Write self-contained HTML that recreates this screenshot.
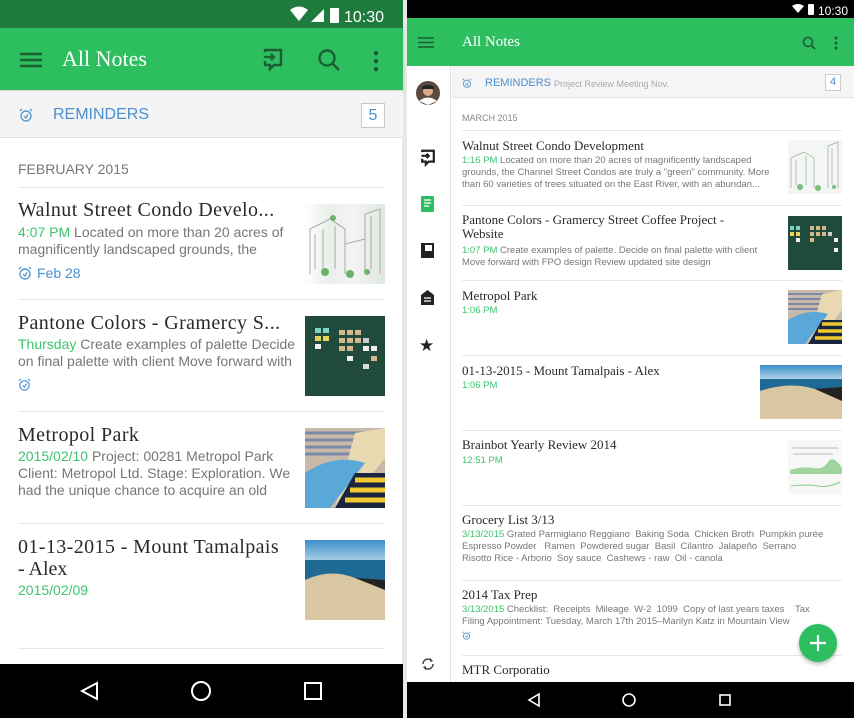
<!DOCTYPE html>
<html><head><meta charset="utf-8"><style>
*{margin:0;padding:0;box-sizing:border-box}
body{width:854px;height:718px;position:relative;overflow:hidden;background:#fff;font-family:"Liberation Sans",sans-serif}
.a{position:absolute;white-space:nowrap}
.ser{font-family:"Liberation Serif",serif;color:#2a2a2a}
.g{color:#3cc46e}
.gr{color:#777}
.div{position:absolute;height:1px;background:#e6e6e6}
</style></head><body>
<svg width="0" height="0" style="position:absolute"><defs><symbol id="al" viewBox="0 0 14 14"><circle cx="7" cy="8" r="5" fill="none" stroke="#5a9bd5" stroke-width="1.4"/><path d="M1 3L3 1M13 3L11 1M5 8L7 10L9 6" fill="none" stroke="#5a9bd5" stroke-width="1.3"/></symbol></defs></svg>
<div class="a" style="left:402px;top:0;width:5px;height:718px;background:#e8e8e8"></div>

<!-- LEFT PHONE -->
<div class="a" style="left:0;top:0;width:403px;height:28px;background:#1e7b3d"></div>
<svg class="a" style="left:288px;top:5px" width="110" height="20" viewBox="0 0 110 20">
<path d="M2 5 Q11 -2 20 5 L11 16Z" fill="#fff"/><path d="M23 17 L36 4 L36 17Z" fill="#fff"/><rect x="42" y="3" width="9" height="15" rx="1" fill="#fff"/>
<text x="56" y="17" font-family="Liberation Sans" font-size="16" fill="#fff">10:30</text></svg>
<div class="a" style="left:0;top:28px;width:403px;height:62px;background:#2dbe60;box-shadow:0 2px 3px rgba(0,0,0,.2)"></div>
<svg class="a" style="left:19px;top:52px" width="24" height="16"><path d="M1 2H23M1 8H23M1 14H23" stroke="#1a5e33" stroke-width="2.4"/></svg>
<div class="a ser" style="left:62px;top:46px;font-size:22px;color:#fff">All Notes</div>
<svg class="a" style="left:262px;top:48px" width="22" height="24" viewBox="0 0 22 24"><path d="M3 4V2H19V17H12L8 21V17H3V13" fill="none" stroke="#1a5e33" stroke-width="2.4"/><path d="M2 9H12M9 6L12 9L9 12" fill="none" stroke="#1a5e33" stroke-width="2.2"/></svg>
<svg class="a" style="left:317px;top:48px" width="24" height="24"><circle cx="10" cy="10" r="7.5" fill="none" stroke="#1a5e33" stroke-width="2.4"/><path d="M15.5 15.5L22 22" stroke="#1a5e33" stroke-width="2.6"/></svg>
<svg class="a" style="left:372px;top:50px" width="8" height="22"><circle cx="4" cy="3" r="2.3" fill="#1a5e33"/><circle cx="4" cy="11" r="2.3" fill="#1a5e33"/><circle cx="4" cy="19" r="2.3" fill="#1a5e33"/></svg>
<div class="a" style="left:0;top:91px;width:403px;height:47px;background:#f4f4f4;border-bottom:1px solid #e2e2e2"></div>
<svg class="a" style="left:19px;top:108px" width="14" height="14"><use href="#al"/></svg>
<div class="a" style="left:53px;top:106px;font-size:16px;color:#4a8fd0">REMINDERS</div>
<div class="a" style="left:361px;top:103px;width:24px;height:25px;border:1px solid #c8c8c8;background:#fff;color:#4a8fd0;font-size:16px;text-align:center;line-height:23px">5</div>
<div class="a gr" style="left:18px;top:161px;font-size:14px">FEBRUARY 2015</div>
<div class="div" style="left:18px;top:187px;width:367px"></div>

<div class="a ser" style="left:18px;top:199px;font-size:20px;letter-spacing:.4px">Walnut Street Condo Develo...</div>
<div class="a gr" style="left:18px;top:224px;font-size:14px"><span class="g">4:07 PM</span> Located on more than 20 acres of</div>
<div class="a gr" style="left:18px;top:241px;font-size:14px">magnificently landscaped grounds, the</div>
<svg class="a" style="left:18px;top:266px" width="14" height="14"><use href="#al"/></svg>
<div class="a" style="left:37px;top:265px;font-size:14px;color:#4a8fd0">Feb 28</div>
<div class="a" style="left:305px;top:204px;width:80px;height:80px;background:linear-gradient(90deg,#fff,#e9efe9 30%,#f3f3f3 60%,#dfe8df);"></div>
<svg class="a" style="left:305px;top:204px" width="80" height="80"><g fill="none" stroke="#999" stroke-width=".8"><path d="M5 70V25L25 15L40 25V70M60 70V10L75 5V70M40 40L60 35M10 30V65M18 25V65M30 22V65M66 12V65"/></g><g fill="#6bb36b"><circle cx="20" cy="68" r="4"/><circle cx="45" cy="70" r="4"/><circle cx="62" cy="68" r="3"/><circle cx="28" cy="14" r="3"/></g></svg>
<div class="div" style="left:18px;top:299px;width:367px"></div>

<div class="a ser" style="left:18px;top:312px;font-size:20px;letter-spacing:.4px">Pantone Colors - Gramercy S...</div>
<div class="a gr" style="left:18px;top:336px;font-size:14px"><span class="g">Thursday</span> Create examples of palette Decide</div>
<div class="a gr" style="left:18px;top:353px;font-size:14px">on final palette with client Move forward with</div>
<svg class="a" style="left:18px;top:378px" width="13" height="13"><use href="#al"/></svg>
<svg class="a" style="left:305px;top:316px" width="80" height="80"><rect width="80" height="80" fill="#1f4a3c"/><g fill="#d9b68a"><rect x="10" y="12" width="6" height="5" fill="#7fd3c6"/><rect x="18" y="12" width="6" height="5" fill="#7fd3c6"/><rect x="10" y="20" width="6" height="5" fill="#e8d35a"/><rect x="18" y="20" width="6" height="5" fill="#e8d35a"/><rect x="10" y="28" width="6" height="5" fill="#eee"/><rect x="34" y="14" width="6" height="5"/><rect x="42" y="14" width="6" height="5"/><rect x="50" y="14" width="6" height="5"/><rect x="34" y="22" width="6" height="5"/><rect x="42" y="22" width="6" height="5"/><rect x="50" y="22" width="6" height="5"/><rect x="58" y="22" width="6" height="5" fill="#ccc"/><rect x="34" y="30" width="6" height="5"/><rect x="42" y="30" width="6" height="5"/><rect x="58" y="30" width="6" height="5" fill="#eee"/><rect x="66" y="30" width="6" height="5" fill="#eee"/><rect x="42" y="40" width="6" height="5" fill="#eee"/><rect x="66" y="40" width="6" height="5"/><rect x="58" y="48" width="6" height="5" fill="#ddd"/></g></svg>
<div class="div" style="left:18px;top:411px;width:367px"></div>

<div class="a ser" style="left:18px;top:424px;font-size:20px;letter-spacing:.4px">Metropol Park</div>
<div class="a gr" style="left:18px;top:448px;font-size:14px"><span class="g">2015/02/10</span> Project: 00281 Metropol Park</div>
<div class="a gr" style="left:18px;top:465px;font-size:14px">Client: Metropol Ltd. Stage: Exploration. We</div>
<div class="a gr" style="left:18px;top:482px;font-size:14px">had the unique chance to acquire an old</div>
<svg class="a" style="left:305px;top:428px" width="80" height="80"><rect width="80" height="80" fill="#c8b9a8"/><path d="M0 5H80M0 12H60M0 19H55M0 26H50" stroke="#7a8aa8" stroke-width="3"/><path d="M30 80L50 5L80 0V30L40 80Z" fill="#e9d9b0"/><path d="M0 80V45Q30 25 60 35L25 80Z" fill="#5aa8d8"/><path d="M30 80L50 45H80V80Z" fill="#1a2540"/><path d="M40 72H80M45 62H80M50 52H80" stroke="#f0c830" stroke-width="5"/></svg>
<div class="div" style="left:18px;top:523px;width:367px"></div>

<div class="a ser" style="left:18px;top:536px;font-size:20px;letter-spacing:.4px">01-13-2015 - Mount Tamalpais</div>
<div class="a ser" style="left:18px;top:558px;font-size:20px">- Alex</div>
<div class="a g" style="left:18px;top:582px;font-size:14px">2015/02/09</div>
<svg class="a" style="left:305px;top:540px" width="80" height="80"><defs><linearGradient id="sk" x1="0" y1="0" x2="0" y2="1"><stop offset="0" stop-color="#3b8fc8"/><stop offset="1" stop-color="#cfe6f2"/></linearGradient></defs><rect width="80" height="28" fill="url(#sk)"/><rect y="20" width="80" height="20" fill="#1e6a95"/><path d="M0 40Q25 28 50 38L80 45V80H0Z" fill="#d8c7a0"/><path d="M50 38L80 40V50Z" fill="#222"/></svg>
<div class="div" style="left:18px;top:648px;width:367px"></div>

<div class="a" style="left:0;top:664px;width:403px;height:54px;background:#000"></div>
<svg class="a" style="left:0;top:664px" width="403" height="54"><g fill="none" stroke="#fff" stroke-width="2"><path d="M97 19V35L82 27Z"/><circle cx="201" cy="27" r="9"/><rect x="305" y="19" width="16" height="16"/></g></svg>

<!-- RIGHT TABLET -->
<div class="a" style="left:407px;top:0;width:447px;height:18px;background:#000"></div>
<svg class="a" style="left:790px;top:2px" width="64" height="15"><path d="M2 4Q8 0 14 4L8 11Z" fill="#fff"/><rect x="18" y="2" width="6" height="11" rx="1" fill="#fff"/><text x="28" y="13" font-family="Liberation Sans" font-size="12" fill="#fff">10:30</text></svg>
<div class="a" style="left:407px;top:18px;width:447px;height:48px;background:#2dbe60"></div>
<svg class="a" style="left:418px;top:37px" width="16" height="11"><path d="M0 1H16M0 5.5H16M0 10H16" stroke="#1a5e33" stroke-width="1.6"/></svg>
<div class="a ser" style="left:462px;top:34px;font-size:15px;color:#fff">All Notes</div>
<svg class="a" style="left:802px;top:36px" width="14" height="14"><circle cx="6" cy="6" r="4.5" fill="none" stroke="#1a5e33" stroke-width="1.6"/><path d="M9.5 9.5L13 13" stroke="#1a5e33" stroke-width="1.8"/></svg>
<svg class="a" style="left:833px;top:36px" width="6" height="14"><circle cx="3" cy="2" r="1.5" fill="#1a5e33"/><circle cx="3" cy="7" r="1.5" fill="#1a5e33"/><circle cx="3" cy="12" r="1.5" fill="#1a5e33"/></svg>
<div class="a" style="left:407px;top:66px;width:44px;height:616px;background:#fff;border-right:1px solid #e2e2e2"></div>
<svg class="a" style="left:416px;top:81px" width="24" height="24"><circle cx="12" cy="12" r="12" fill="#5a4a40"/><circle cx="12" cy="10" r="5" fill="#d8a888"/><path d="M3 20Q12 13 21 20L12 24Z" fill="#fff"/><path d="M6 6Q12 2 18 6V8H6Z" fill="#222"/></svg>
<svg class="a" style="left:420px;top:149px" width="16" height="18" viewBox="0 0 22 24"><path d="M3 4V2H19V17H12L8 21V17H3V13" fill="none" stroke="#222" stroke-width="3"/><path d="M2 9H12M9 6L12 9L9 12" fill="none" stroke="#222" stroke-width="3"/></svg>
<svg class="a" style="left:421px;top:196px" width="13" height="16"><rect width="13" height="16" rx="1.5" fill="#2dbe60"/><path d="M3 4H10M3 7H10M3 10H8" stroke="#fff" stroke-width="1.2"/></svg>
<svg class="a" style="left:421px;top:243px" width="13" height="15"><rect width="13" height="15" fill="#222"/><rect x="4" y="2" width="7" height="6" fill="#fff"/></svg>
<svg class="a" style="left:421px;top:290px" width="13" height="15"><path d="M6.5 0L13 5V15H0V5Z" fill="#222"/><path d="M3 8H10M3 11H10" stroke="#fff" stroke-width="1.2"/></svg>
<div class="a" style="left:419px;top:336px;font-size:17px;color:#222">★</div>
<svg class="a" style="left:421px;top:657px" width="14" height="14"><path d="M2 7A5 5 0 0 1 11 4M12 7A5 5 0 0 1 3 10" fill="none" stroke="#444" stroke-width="1.5"/><path d="M9 1L12 4L9 5Z M5 9L2 10L5 13Z" fill="#444"/></svg>
<div class="a" style="left:452px;top:66px;width:402px;height:32px;background:#f5f5f5;border-bottom:1px solid #e4e4e4"></div>
<svg class="a" style="left:462px;top:78px" width="10" height="10"><use href="#al"/></svg>
<div class="a" style="left:485px;top:77px;font-size:11px;color:#4a8fd0">REMINDERS</div>
<div class="a" style="left:554px;top:79px;font-size:9px;color:#aaa">Project Review Meeting Nov.</div>
<div class="a" style="left:825px;top:74px;width:16px;height:17px;border:1px solid #ccc;background:#fff;font-size:11px;color:#4a8fd0;text-align:center;line-height:15px">4</div>
<div class="a" style="left:462px;top:113px;font-size:9px;color:#888">MARCH 2015</div>
<div class="div" style="left:462px;top:130px;width:380px"></div>

<div class="a ser" style="left:462px;top:138px;font-size:13px">Walnut Street Condo Development</div>
<div class="a gr" style="left:462px;top:155px;font-size:9.5px;line-height:12px"><span class="g">1:16 PM</span> Located on more than 20 acres of magnificently landscaped<br>grounds, the Channel Street Condos are truly a "green" community. More<br>than 60 varieties of trees situated on the East River, with an abundan...</div>
<svg class="a" style="left:788px;top:140px" width="54" height="54"><rect width="54" height="54" fill="#f4f6f4"/><g fill="none" stroke="#9a9" stroke-width=".7"><path d="M3 48V18L16 12L26 18V48M40 48V6L50 2V48M8 20V45M18 16V45M44 8V45"/></g><g fill="#7bbd7b"><circle cx="12" cy="47" r="3"/><circle cx="30" cy="48" r="3"/><circle cx="46" cy="47" r="2"/></g></svg>
<div class="div" style="left:462px;top:205px;width:380px"></div>

<div class="a ser" style="left:462px;top:213px;font-size:13px;line-height:14px">Pantone Colors - Gramercy Street Coffee Project -<br>Website</div>
<div class="a gr" style="left:462px;top:245px;font-size:9.5px;line-height:12px"><span class="g">1:07 PM</span> Create examples of palette. Decide on final palette with client<br>Move forward with FPO design Review updated site design</div>
<svg class="a" style="left:788px;top:216px" width="54" height="54"><rect width="54" height="54" fill="#1f4a3c"/><g fill="#d9b68a"><rect x="2" y="10" width="4" height="4" fill="#7fd3c6"/><rect x="8" y="10" width="4" height="4" fill="#7fd3c6"/><rect x="2" y="16" width="4" height="4" fill="#e8d35a"/><rect x="8" y="16" width="4" height="4" fill="#e8d35a"/><rect x="8" y="22" width="4" height="4" fill="#eee"/><rect x="22" y="10" width="4" height="4"/><rect x="28" y="10" width="4" height="4"/><rect x="34" y="10" width="4" height="4"/><rect x="22" y="16" width="4" height="4"/><rect x="28" y="16" width="4" height="4"/><rect x="34" y="16" width="4" height="4"/><rect x="40" y="16" width="4" height="4" fill="#ccc"/><rect x="22" y="22" width="4" height="4"/><rect x="46" y="22" width="4" height="4" fill="#eee"/><rect x="46" y="32" width="4" height="4" fill="#eee"/></g></svg>
<div class="div" style="left:462px;top:280px;width:380px"></div>

<div class="a ser" style="left:462px;top:288px;font-size:13px">Metropol Park</div>
<div class="a g" style="left:462px;top:305px;font-size:9.5px">1:06 PM</div>
<svg class="a" style="left:788px;top:290px" width="54" height="54"><rect width="54" height="54" fill="#c8b9a8"/><path d="M0 4H54M0 9H40M0 14H36M0 19H34" stroke="#7a8aa8" stroke-width="2"/><path d="M20 54L34 4L54 0V20L27 54Z" fill="#e9d9b0"/><path d="M0 54V30Q20 18 40 24L17 54Z" fill="#5aa8d8"/><path d="M20 54L34 30H54V54Z" fill="#1a2540"/><path d="M27 48H54M30 41H54M34 34H54" stroke="#f0c830" stroke-width="3.5"/></svg>
<div class="div" style="left:462px;top:355px;width:380px"></div>

<div class="a ser" style="left:462px;top:363px;font-size:13px">01-13-2015 - Mount Tamalpais - Alex</div>
<div class="a g" style="left:462px;top:380px;font-size:9.5px">1:06 PM</div>
<svg class="a" style="left:760px;top:365px" width="82" height="54"><defs><linearGradient id="sk2" x1="0" y1="0" x2="0" y2="1"><stop offset="0" stop-color="#3b8fc8"/><stop offset="1" stop-color="#cfe6f2"/></linearGradient></defs><rect width="82" height="18" fill="url(#sk2)"/><rect y="14" width="82" height="14" fill="#1e6a95"/><path d="M0 26Q30 16 55 24L82 32V54H0Z" fill="#d8c7a0"/><path d="M55 24L82 22V36Z" fill="#222"/></svg>
<div class="div" style="left:462px;top:430px;width:380px"></div>

<div class="a ser" style="left:462px;top:437px;font-size:13px">Brainbot Yearly Review 2014</div>
<div class="a g" style="left:462px;top:455px;font-size:9.5px">12:51 PM</div>
<svg class="a" style="left:788px;top:440px" width="54" height="54"><rect width="54" height="54" fill="#f7f7f7"/><path d="M3 8H50M5 14H45" stroke="#bbb" stroke-width="1"/><path d="M2 30Q15 26 25 28T40 22T54 28V34H2Z" fill="#9fd39f"/><path d="M3 46Q20 44 30 46T52 42" stroke="#8c8" fill="none"/></svg>
<div class="div" style="left:462px;top:505px;width:380px"></div>

<div class="a ser" style="left:462px;top:512px;font-size:13px">Grocery List 3/13</div>
<div class="a gr" style="left:462px;top:529px;font-size:9.5px;line-height:12px"><span class="g">3/13/2015</span> Grated Parmigiano Reggiano &nbsp;Baking Soda &nbsp;Chicken Broth &nbsp;Pumpkin purée<br>Espresso Powder &nbsp; Ramen &nbsp;Powdered sugar &nbsp;Basil &nbsp;Cilantro &nbsp;Jalapeño &nbsp;Serrano<br>Risotto Rice - Arborio &nbsp;Soy sauce &nbsp;Cashews - raw &nbsp;Oil - canola</div>
<div class="div" style="left:462px;top:580px;width:380px"></div>

<div class="a ser" style="left:462px;top:587px;font-size:13px">2014 Tax Prep</div>
<div class="a gr" style="left:462px;top:604px;font-size:9.5px;line-height:12px"><span class="g">3/13/2015</span> Checklist: &nbsp;Receipts &nbsp;Mileage &nbsp;W-2 &nbsp;1099 &nbsp;Copy of last years taxes &nbsp; &nbsp;Tax<br>Filing Appointment: Tuesday, March 17th 2015–Marilyn Katz in Mountain View</div>
<svg class="a" style="left:462px;top:631px" width="9" height="9"><use href="#al"/></svg>
<div class="div" style="left:462px;top:655px;width:380px"></div>
<div class="a ser" style="left:462px;top:662px;font-size:13px">MTR Corporatio</div>

<div class="a" style="left:799px;top:624px;width:38px;height:38px;border-radius:50%;background:#2dbe60;box-shadow:0 2px 4px rgba(0,0,0,.3)"></div>
<svg class="a" style="left:808px;top:633px" width="20" height="20"><path d="M10 2V18M2 10H18" stroke="#fff" stroke-width="2.2"/></svg>

<div class="a" style="left:407px;top:682px;width:447px;height:36px;background:#000"></div>
<svg class="a" style="left:407px;top:682px" width="447" height="36"><g fill="none" stroke="#fff" stroke-width="1.6"><path d="M132 12V24L122 18Z"/><circle cx="222" cy="18" r="6"/><rect x="313" y="13" width="10" height="10"/></g></svg>
</body></html>
